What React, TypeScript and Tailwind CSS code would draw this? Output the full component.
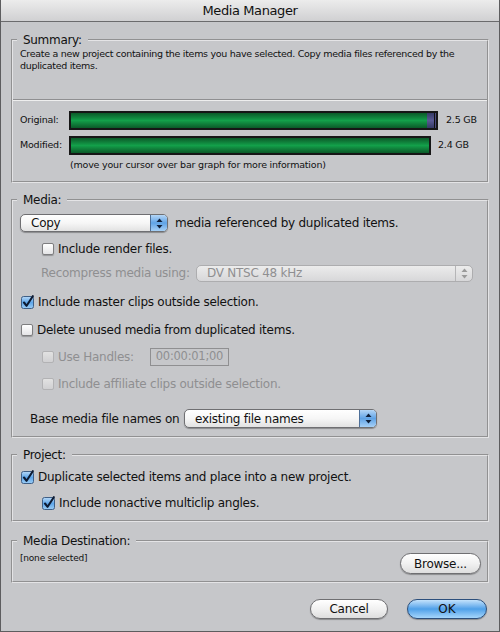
import React from 'react';

const font = { fontFamily: '"DejaVu Sans", "Liberation Sans", sans-serif' };

function Check({ checked = false, disabled = false }: { checked?: boolean; disabled?: boolean }) {
  if (checked) {
    return (
      <svg width="14" height="14" viewBox="0 0 14 14" className="shrink-0">
        <defs>
          <linearGradient id="cbBlue" x1="0" y1="0" x2="0" y2="1">
            <stop offset="0" stopColor="#b8d9f7" />
            <stop offset="0.5" stopColor="#5ea6ea" />
            <stop offset="1" stopColor="#9ccdf5" />
          </linearGradient>
        </defs>
        <rect x="0.5" y="1.5" width="12" height="12" rx="2" fill="url(#cbBlue)" stroke="#3f5f86" />
        <path d="M3 7.5 L5.6 10.8 L11.8 1.2" fill="none" stroke="#0d1b33" strokeWidth="2.1" strokeLinecap="round" strokeLinejoin="round" />
      </svg>
    );
  }
  return (
    <span
      className={
        'inline-block h-[12px] w-[12px] shrink-0 rounded-[2px] border ' +
        (disabled
          ? 'border-[#b2b2b4] bg-gradient-to-b from-[#e2e2e2] to-[#d0d0d2]'
          : 'border-[#7e7e80] bg-gradient-to-b from-white to-[#e4e4e6] shadow-[0_1px_1px_rgba(0,0,0,0.25)]')
      }
    />
  );
}

function Arrows({ disabled = false }: { disabled?: boolean }) {
  const c = disabled ? '#9a9a9a' : '#10203a';
  return (
    <svg width="7" height="11" viewBox="0 0 7 11">
      <path d="M3.5 0.5 L6.5 4 L0.5 4 Z" fill={c} />
      <path d="M3.5 10.5 L6.5 7 L0.5 7 Z" fill={c} />
    </svg>
  );
}

function Popup({ label, width, height = 18, disabled = false }: { label: string; width: string; height?: number; disabled?: boolean }) {
  return (
    <div
      className={
        'flex shrink-0 items-stretch overflow-hidden rounded-[5px] border ' +
        width +
        (disabled
          ? ' border-[#adadaf] bg-gradient-to-b from-[#ececec] to-[#d7d7d9] text-[#8f8f91]'
          : ' border-[#6f6f72] bg-gradient-to-b from-white via-[#f6f6f6] to-[#e2e2e2] text-[#111] shadow-[0_1px_1px_rgba(0,0,0,0.3)]')
      }
      style={{ height }}
    >
      <span className="flex flex-1 items-center pl-[10px] text-[12px] leading-none tracking-[-0.25px]">{label}</span>
      <span
        className={
          'flex w-[17px] items-center justify-center border-l ' +
          (disabled
            ? 'border-[#b5b5b7] bg-transparent'
            : 'border-[#4d6f98] bg-gradient-to-b from-[#b4d6f6] via-[#5fa3e6] to-[#a6d0f6]')
        }
      >
        <Arrows disabled={disabled} />
      </span>
    </div>
  );
}

function Row({ children, className = '' }: { children: React.ReactNode; className?: string }) {
  return <div className={'flex h-[14px] items-center text-[12px] tracking-[-0.25px] whitespace-nowrap ' + className}>{children}</div>;
}

function Bar({ width, cap = false }: { width: string; cap?: boolean }) {
  return (
    <div className={'flex h-[19px] border-2 border-[#161616] ' + width}>
      <div className="flex-1 bg-gradient-to-b from-[#0b5a29] via-[#13a04a] to-[#0b5a29]" />
      {cap && (
        <>
          <div className="w-[7px] bg-gradient-to-b from-[#353a66] via-[#5a5a94] to-[#353a66]" />
          <div className="w-[1px] bg-[#111]" />
          <div className="w-[1px] bg-[#4a4a80]" />
        </>
      )}
    </div>
  );
}

const groove = 'border-2 [border-style:groove] border-[#e4e4e6]';
const legend = 'ml-[4px] px-[6px] text-[12px] leading-[16px] tracking-[-0.3px]';
const aqua =
  'rounded-full border border-[#6f6f72] bg-gradient-to-b from-white via-[#f1f1f1] to-[#dedede] text-[12px] tracking-[-0.25px] shadow-[0_1px_1px_rgba(0,0,0,0.3)]';

export default function App() {
  return (
    <div className="flex h-[632px] w-[500px] flex-col border-x border-b border-[#5d5d5f] bg-[#c6c7ca] text-[#111]" style={font}>
      <div className="flex h-[22px] items-center justify-center border-b border-[#6b6b6d] bg-gradient-to-b from-[#ececec] to-[#d0d0d2] text-[13px] tracking-[-0.4px]">
        Media Manager
      </div>

      <div className="flex flex-1 flex-col px-[10px]">
        {/* Summary */}
        <fieldset className={'mt-[10px] ' + groove}>
          <legend className={legend}>Summary:</legend>
          <p className="px-[7px] text-[9.5px] leading-[12px] tracking-[-0.3px]">
            Create a new project containing the items you have selected. Copy media files referenced by the duplicated items.
          </p>
          <div className="mt-[27px] h-[2px] border-t border-b border-t-[#8f8f91] border-b-[#eeeeee]" />
          <div className="mt-[10px] flex items-center text-[9.5px] tracking-[-0.2px]">
            <span className="w-[56px] pl-[7px]">Original:</span>
            <Bar width="w-[369px]" cap />
            <span className="ml-[8px]">2.5 GB</span>
          </div>
          <div className="mt-[6px] flex items-center text-[9.5px] tracking-[-0.2px]">
            <span className="w-[56px] pl-[7px]">Modified:</span>
            <Bar width="w-[362px]" />
            <span className="ml-[7px]">2.4 GB</span>
          </div>
          <p className="mt-[4px] pb-[10px] pl-[57px] text-[9.5px] leading-[12px] tracking-[-0.2px]">
            (move your cursor over bar graph for more information)
          </p>
        </fieldset>

        {/* Media */}
        <fieldset className={'mt-[9px] pb-[8px] ' + groove}>
          <legend className={legend}>Media:</legend>
          <div className="mt-[6px] flex items-center whitespace-nowrap pl-[7px] text-[12px] tracking-[-0.25px]">
            <Popup label="Copy" width="w-[148px]" />
            <span className="ml-[7px]">media referenced by duplicated items.</span>
          </div>
          <Row className="mt-[10px] pl-[29px]">
            <Check />
            <span className="ml-[4px]">Include render files.</span>
          </Row>
          <div className="mt-[8px] flex items-center whitespace-nowrap pl-[28px] text-[12px] tracking-[-0.25px]">
            <span className="w-[155px] text-[#8f8f91]">Recompress media using:</span>
            <Popup label="DV NTSC 48 kHz" width="w-[277px]" height={17} disabled />
          </div>
          <Row className="mt-[13px] pl-[8px]">
            <Check checked />
            <span className="ml-[3px]">Include master clips outside selection.</span>
          </Row>
          <Row className="mt-[14px] pl-[8px]">
            <Check />
            <span className="ml-[4px]">Delete unused media from duplicated items.</span>
          </Row>
          <div className="mt-[11px] flex h-[18px] items-center whitespace-nowrap pl-[29px] text-[12px] tracking-[-0.25px]">
            <Check disabled />
            <span className="ml-[4px] w-[92px] text-[#8f8f91]">Use Handles:</span>
            <span className="flex h-[18px] w-[79px] items-center justify-center border border-[#8f8f91] text-[11.5px] text-[#8f8f91]">
              00:00:01;00
            </span>
          </div>
          <Row className="mt-[11px] pl-[29px]">
            <Check disabled />
            <span className="ml-[4px] text-[#8f8f91]">Include affiliate clips outside selection.</span>
          </Row>
          <div className="mt-[18px] flex items-center whitespace-nowrap pl-[17px] text-[12px] tracking-[-0.25px]">
            <span className="w-[154px]">Base media file names on</span>
            <Popup label="existing file names" width="w-[193px]" height={19} />
          </div>
        </fieldset>

        {/* Project */}
        <fieldset className={'mt-[9px] pb-[10px] ' + groove}>
          <legend className={legend}>Project:</legend>
          <Row className="mt-[7px] pl-[8px]">
            <Check checked />
            <span className="ml-[3px]">Duplicate selected items and place into a new project.</span>
          </Row>
          <Row className="mt-[12px] pl-[29px]">
            <Check checked />
            <span className="ml-[3px]">Include nonactive multiclip angles.</span>
          </Row>
        </fieldset>

        {/* Media Destination */}
        <fieldset className={'mt-[11px] pb-[7px] ' + groove}>
          <legend className={legend}>Media Destination:</legend>
          <div className="flex items-start justify-between pl-[7px] pr-[6px]">
            <span className="mt-[3px] text-[9px] leading-[12px] tracking-[-0.2px]">[none selected]</span>
            <button className={'mt-[4px] h-[21px] w-[81px] ' + aqua}>Browse...</button>
          </div>
        </fieldset>

        <div className="mt-[16px] flex justify-end gap-[19px] pr-[2px]">
          <button className={'h-[20px] w-[78px] ' + aqua}>Cancel</button>
          <button className="h-[20px] w-[80px] rounded-full border border-[#2c4f7c] bg-gradient-to-b from-[#c3e2fb] via-[#4ea0e8] to-[#a5d6fb] text-[12px] shadow-[0_1px_1px_rgba(0,0,0,0.3)]">
            OK
          </button>
        </div>
      </div>
    </div>
  );
}
